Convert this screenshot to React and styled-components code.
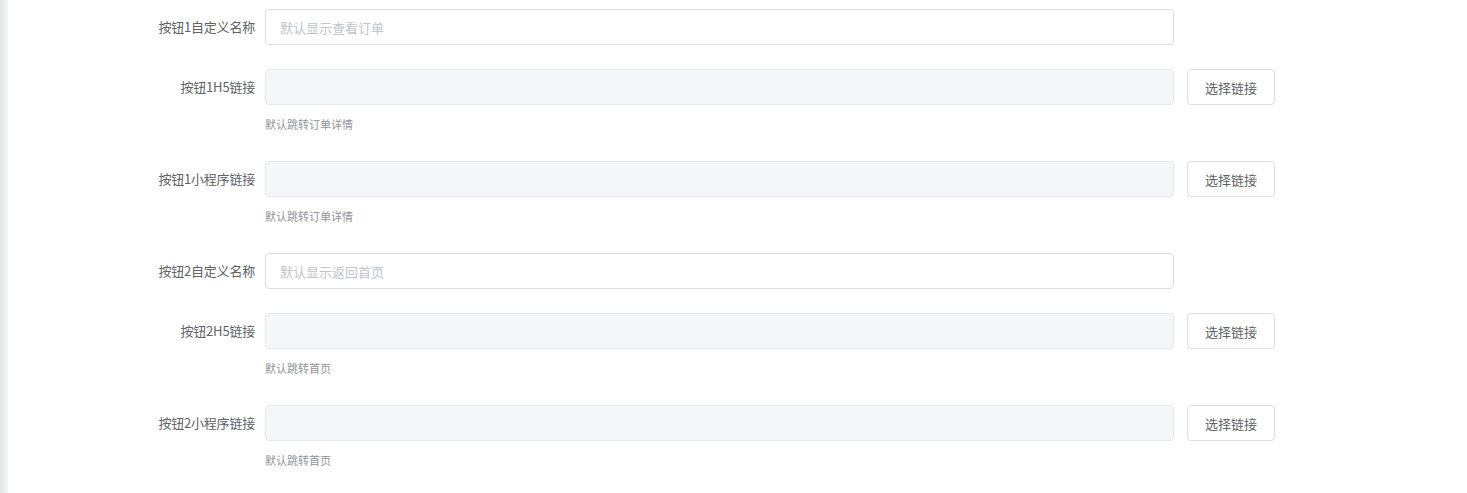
import React from 'react'
import styled, { createGlobalStyle } from 'styled-components'

const rows = [
  { label: '按钮1自定义名称', placeholder: '默认显示查看订单' },
  { label: '按钮1H5链接', disabled: true, tip: '默认跳转订单详情' },
  { label: '按钮1小程序链接', disabled: true, tip: '默认跳转订单详情' },
  { label: '按钮2自定义名称', placeholder: '默认显示返回首页' },
  { label: '按钮2H5链接', disabled: true, tip: '默认跳转首页' },
  { label: '按钮2小程序链接', disabled: true, tip: '默认跳转首页' },
]

const App = () => (
  <Root>
    <GlobalStyle />
    <SideStrip />
    <Form>
      {rows.map((row) => (
        <FormItem key={row.label}>
          <Label>{row.label}</Label>
          <Content>
            <Line>
              {row.disabled ? (
                <Input disabled />
              ) : (
                <Input placeholder={row.placeholder} />
              )}
              {row.disabled && <LinkButton>选择链接</LinkButton>}
            </Line>
            {row.tip && <Tip>{row.tip}</Tip>}
          </Content>
        </FormItem>
      ))}
    </Form>
  </Root>
)

const GlobalStyle = createGlobalStyle`
  body {
    margin: 0;
    background: #fff;
    font-family: "Noto Sans CJK SC", "Liberation Sans", sans-serif;
  }
  * { box-sizing: border-box; }
`

const Root = styled.div`
  display: flex;
  height: 493px;
  overflow: hidden;
`

const SideStrip = styled.div`
  width: 8px;
  flex-shrink: 0;
  background: linear-gradient(to right, #e4e7ec, #f3f4f6);
`

const Form = styled.div`
  padding: 9px 0 0 137px;
`

const FormItem = styled.div`
  display: flex;
  margin-bottom: 24px;
`

const Label = styled.div`
  width: 120px;
  padding-right: 10px;
  text-align: right;
  font-size: 13px;
  letter-spacing: -0.2px;
  line-height: 36px;
  color: #606266;
  white-space: nowrap;
`

const Content = styled.div`
  display: flex;
  flex-direction: column;
`

const Line = styled.div`
  display: flex;
  align-items: center;
`

const Input = styled.input`
  width: 909px;
  height: 36px;
  padding: 0 14px;
  border: 1px solid #dcdfe6;
  border-radius: 4px;
  font-family: inherit;
  font-size: 13px;
  color: #606266;
  background: #fff;
  outline: none;

  &::placeholder {
    color: #c0c4cc;
  }

  &:disabled {
    background: #f5f6fa;
    border-color: #e4e7ed;
  }
`

const LinkButton = styled.button`
  margin-left: 13px;
  width: 88px;
  height: 36px;
  border: 1px solid #dcdfe6;
  border-radius: 4px;
  background: #fff;
  font-family: inherit;
  font-size: 13px;
  color: #606266;
  cursor: pointer;
`

const Tip = styled.div`
  padding: 12px 0 6px;
  font-size: 11px;
  line-height: 14px;
  color: #909399;
`

export default App
